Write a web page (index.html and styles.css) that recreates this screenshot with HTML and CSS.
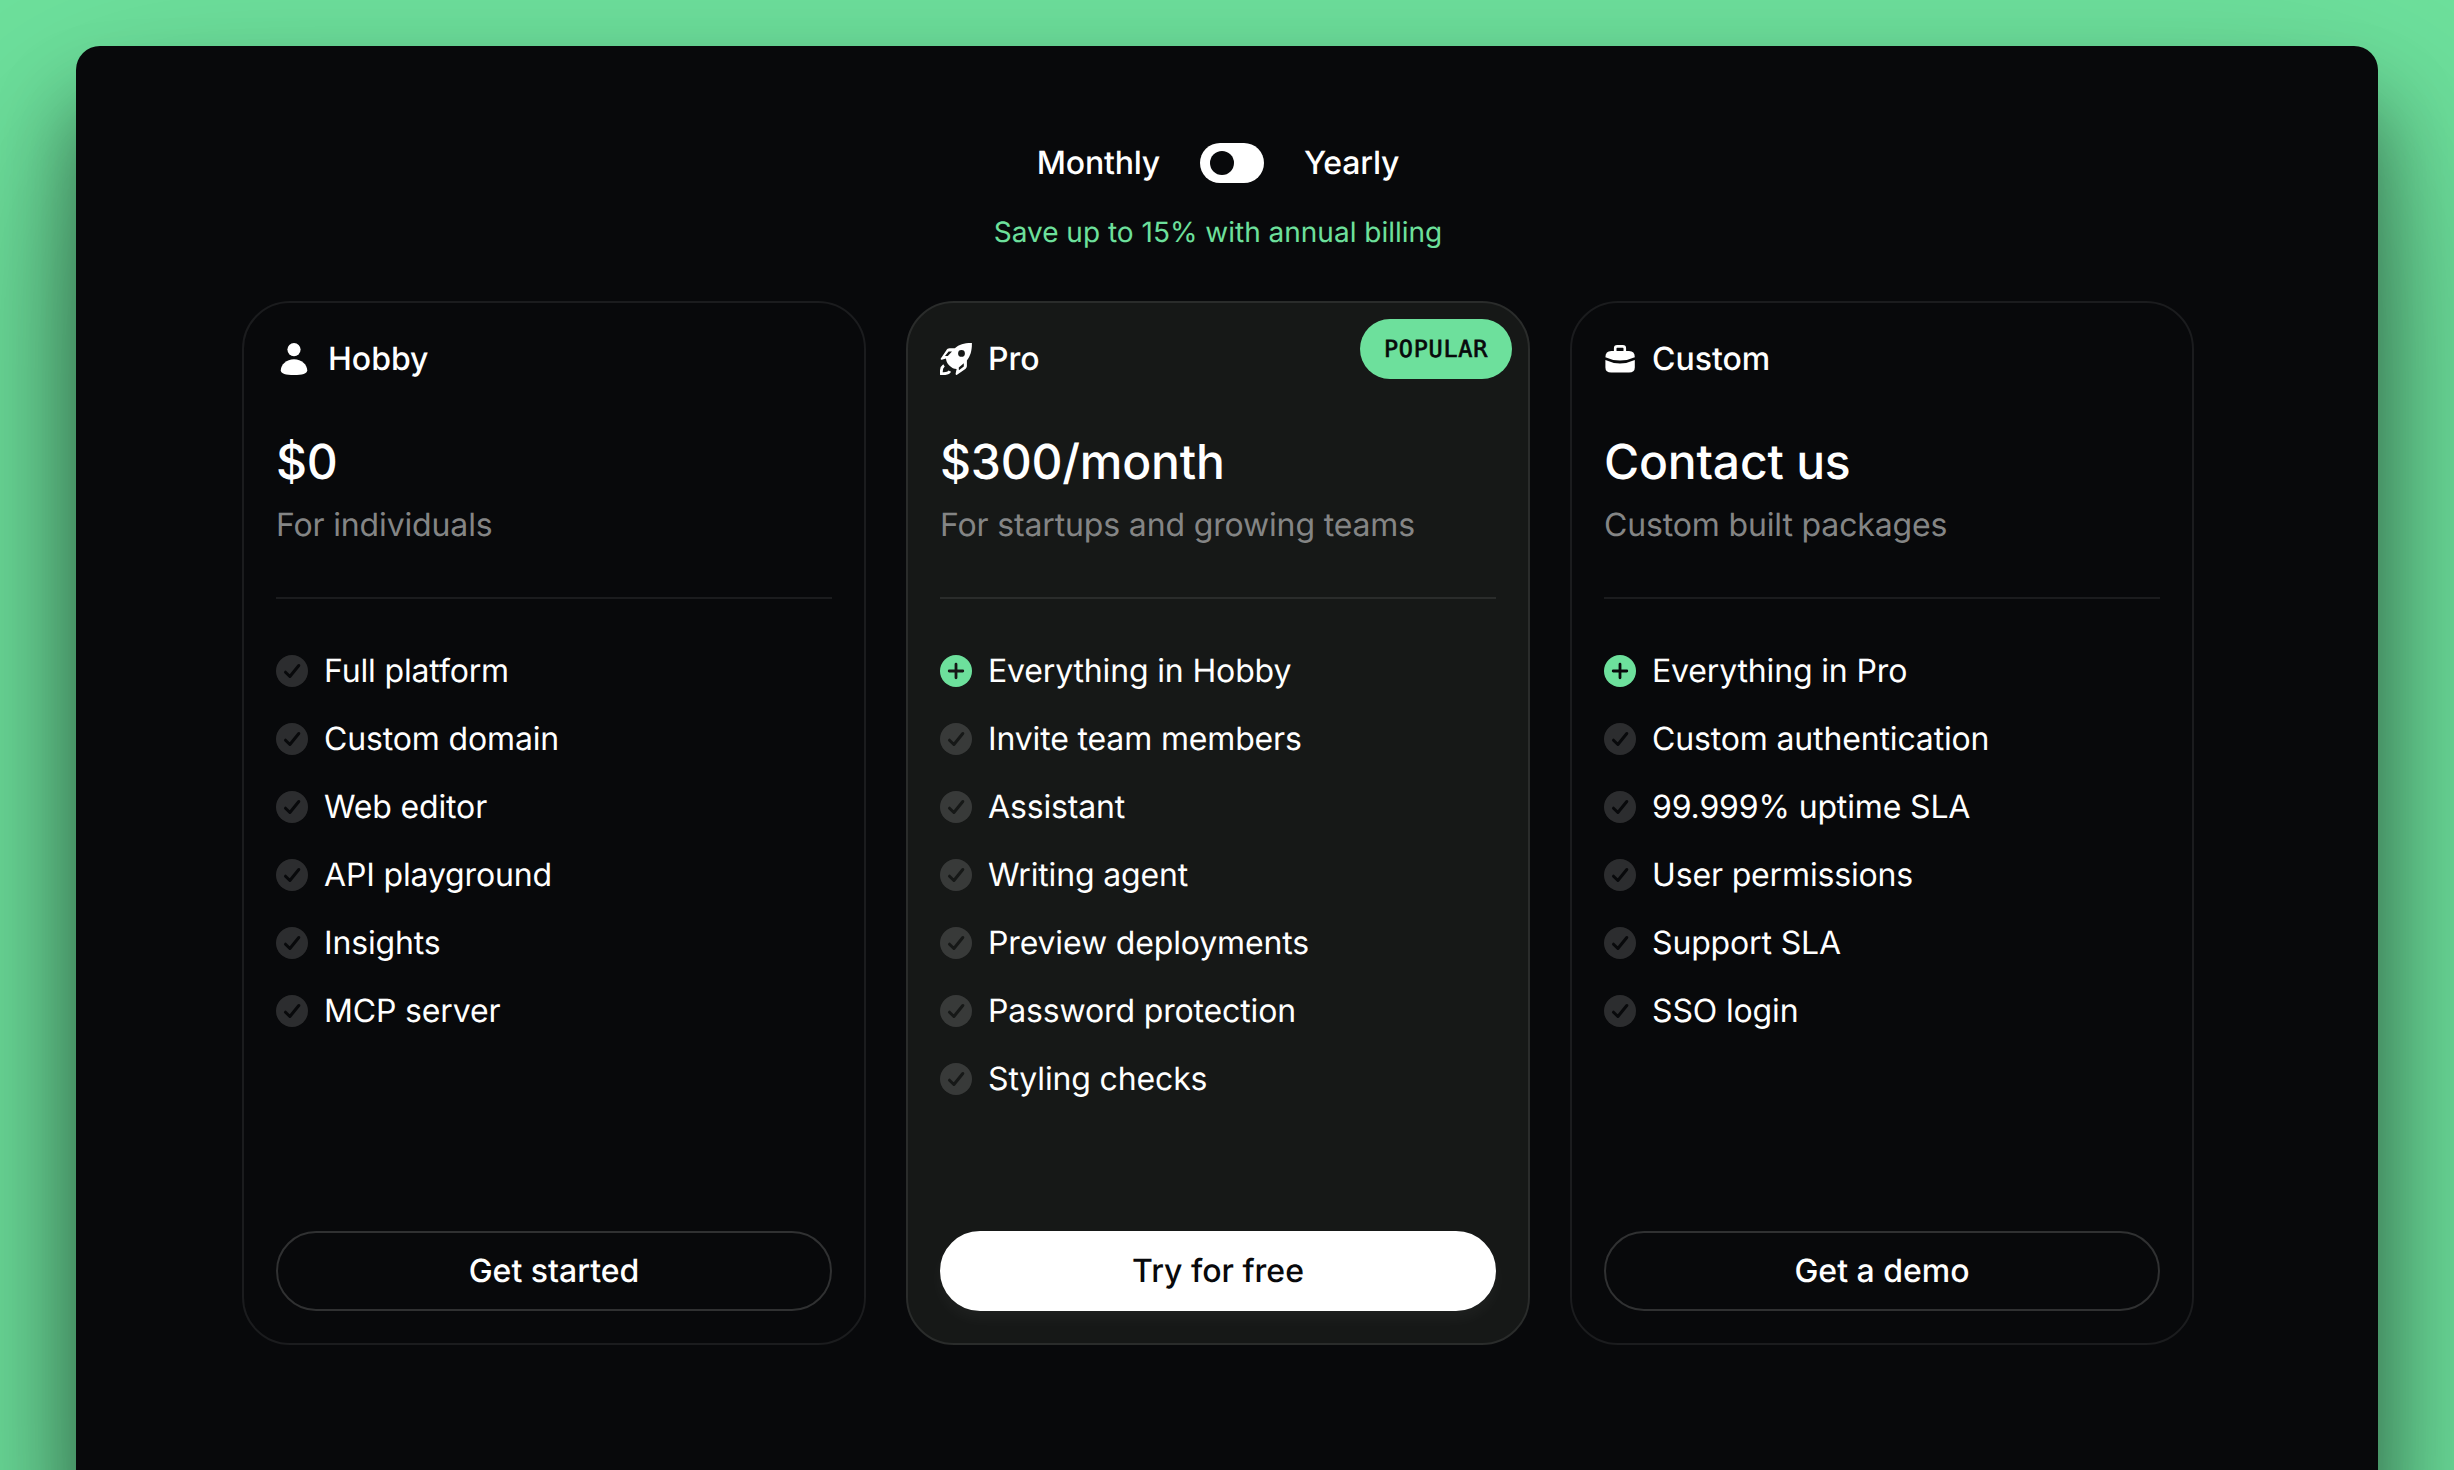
FILE: index.html
```html
<!DOCTYPE html>
<html lang="en">
<head>
  <meta charset="UTF-8" />
  <meta name="viewport" content="width=device-width, initial-scale=1.0"/>
  <title>Pricing</title>
  <link rel="stylesheet" href="styles.css">
</head>
<body>
  <!-- shared list icons -->
  <svg class="sprite" width="0" height="0">
    <symbol id="check" viewBox="0 0 32 32">
      <circle cx="16" cy="16" r="16" fill="#fff" fill-opacity=".15"/>
      <path d="M9.5 17.2L13.9 21.5L22.8 10.5" fill="none" stroke="var(--card-bg)" stroke-width="3" stroke-linecap="round" stroke-linejoin="round"/>
    </symbol>
    <symbol id="plus" viewBox="0 0 32 32">
      <circle cx="16" cy="16" r="16" fill="#6de09c"/>
      <path d="M16 9.2V22.8M9.2 16H22.8" fill="none" stroke="var(--card-bg)" stroke-width="2.8" stroke-linecap="round"/>
    </symbol>
  </svg>

  <main class="panel">
    <div class="billing">
      <div class="billing-row">
        <span>Monthly</span>
        <button class="toggle" type="button" role="switch" aria-checked="false" aria-label="Yearly billing"></button>
        <span>Yearly</span>
      </div>
      <p class="save">Save up to 15% with annual billing</p>
    </div>

    <div class="plans">
      <section class="card">
        <h2>
          <svg class="icon person" viewBox="0 0 36 36">
            <circle cx="18" cy="8.6" r="6.6"/>
            <path d="M18 18.2C25.5 18.2 31.2 23.6 31.2 29.2C31.2 32.6 26.2 34 18 34S4.8 32.6 4.8 29.2C4.8 23.6 10.5 18.2 18 18.2Z"/>
          </svg>
          <span>Hobby</span>
        </h2>
        <p class="price">$0</p>
        <p class="desc">For individuals</p>
        <hr>
        <ul>
          <li><svg><use href="#check"/></svg>Full platform</li>
          <li><svg><use href="#check"/></svg>Custom domain</li>
          <li><svg><use href="#check"/></svg>Web editor</li>
          <li><svg><use href="#check"/></svg>API playground</li>
          <li><svg><use href="#check"/></svg>Insights</li>
          <li><svg><use href="#check"/></svg>MCP server</li>
        </ul>
        <a class="btn" href="#">Get started</a>
      </section>

      <section class="card featured">
        <span class="badge">POPULAR</span>
        <h2>
          <svg class="icon" viewBox="0 0 32 32">
            <path fill-rule="evenodd" d="M31.9 .1C24 0 19.4 1.6 14.8 5.2H9.6C8 5.2 7 6 6.2 7.4L.8 15.4C.4 16.2 .9 16.9 1.8 16.7L6 15.4C6.2 18 6.9 20 9.3 22.6C11.8 25.2 14 25.9 16.6 26L15.6 30.8C15.4 31.8 16.2 32.2 17 31.7L25 26.2C26.4 25.2 26.9 24.2 26.9 22.8V17.4C30.5 12.8 32 8 31.9 .1ZM21.5 7A3.4 3.4 0 1 1 21.5 13.8A3.4 3.4 0 1 1 21.5 7ZM5 13L8.6 8.4H12L7.8 13.1ZM18.9 27.2L18.8 24.4L23.8 20.2V23.4Z"/>
            <path d="M4 22.4C.8 24.4 1.2 27.4 1.4 30.6C5 30.9 8.4 31 9.8 28.2" fill="none" stroke="#fff" stroke-width="2.8"/>
          </svg>
          <span>Pro</span>
        </h2>
        <p class="price">$300/month</p>
        <p class="desc">For startups and growing teams</p>
        <hr>
        <ul>
          <li><svg><use href="#plus"/></svg>Everything in Hobby</li>
          <li><svg><use href="#check"/></svg>Invite team members</li>
          <li><svg><use href="#check"/></svg>Assistant</li>
          <li><svg><use href="#check"/></svg>Writing agent</li>
          <li><svg><use href="#check"/></svg>Preview deployments</li>
          <li><svg><use href="#check"/></svg>Password protection</li>
          <li><svg><use href="#check"/></svg>Styling checks</li>
        </ul>
        <a class="btn btn-primary" href="#">Try for free</a>
      </section>

      <section class="card">
        <h2>
          <svg class="icon" viewBox="0 0 32 32">
            <path d="M11.2 8.5V5.4Q11.2 3.4 13.2 3.4H18.8Q20.8 3.4 20.8 5.4V8.5" fill="none" stroke="#fff" stroke-width="2.6"/>
            <path d="M7.3 8H25Q30.8 8 30.8 14.2Q23.5 17.6 16 17.6T1.4 14.2Q1.4 8 7.3 8Z"/>
            <path d="M1.4 17Q8.5 20.4 16 20.4T30.8 17V24.5Q30.8 29.6 25 29.6H7.3Q1.4 29.6 1.4 24.5Z"/>
          </svg>
          <span>Custom</span>
        </h2>
        <p class="price">Contact us</p>
        <p class="desc">Custom built packages</p>
        <hr>
        <ul>
          <li><svg><use href="#plus"/></svg>Everything in Pro</li>
          <li><svg><use href="#check"/></svg>Custom authentication</li>
          <li><svg><use href="#check"/></svg>99.999% uptime SLA</li>
          <li><svg><use href="#check"/></svg>User permissions</li>
          <li><svg><use href="#check"/></svg>Support SLA</li>
          <li><svg><use href="#check"/></svg>SSO login</li>
        </ul>
        <a class="btn" href="#">Get a demo</a>
      </section>
    </div>
  </main>
</body>
</html>
```

FILE: styles.css
```css
* {
  box-sizing: border-box;
}

body {
  font-family: Inter, sans-serif;
  font-size: 32px;
  text-rendering: geometricPrecision;
  background: #6de09c;
  color: #fff;
  margin: 0;
  padding: 46px 76px 0;
  height: 1470px;
  overflow: hidden;
}

.sprite {
  position: absolute;
}

.panel {
  height: 1500px;
  padding: 93px 184px 0 166px;
  background: #08090b;
  border-radius: 24px;
  box-shadow: 0 100px 200px rgba(0, 0, 0, 0.35), 0 60px 80px rgba(0, 0, 0, 0.4);
}

.billing {
  display: flex;
  flex-direction: column;
  align-items: center;
}

.billing-row {
  display: flex;
  align-items: center;
  gap: 40px;
  height: 48px;
  font-weight: 500;
  letter-spacing: -0.2px;
}

.billing-row span {
  padding-bottom: 2px;
}

.toggle {
  width: 64px;
  height: 40px;
  padding: 0 10px;
  border: none;
  border-radius: 20px;
  background: #fff;
}

.toggle::before {
  content: "";
  display: block;
  width: 24px;
  height: 24px;
  border-radius: 50%;
  background: #08090b;
}

.save {
  margin: 25px 0 0;
  font-size: 28px;
  line-height: 40px;
  color: #6de09c;
}

.plans {
  display: grid;
  grid-template-columns: repeat(3, 1fr);
  gap: 40px;
  margin-top: 49px;
}

.card {
  --card-bg: #08090b;
  position: relative;
  display: flex;
  flex-direction: column;
  height: 1044px;
  padding: 32px;
  border: 2px solid #1b1c1e;
  border-radius: 48px;
  background: var(--card-bg);
}

.card.featured {
  --card-bg: #161817;
  border-color: #2a2c2b;
}

h2 {
  display: flex;
  align-items: center;
  gap: 16px;
  height: 48px;
  margin: 0;
  font-size: 32px;
  font-weight: 500;
}

h2 span {
  padding-bottom: 2px;
}

.icon {
  width: 32px;
  height: 32px;
  fill: #fff;
}

.icon.person {
  width: 36px;
  height: 36px;
}

.badge {
  position: absolute;
  top: 16px;
  right: 16px;
  height: 60px;
  padding: 0 24px;
  border-radius: 30px;
  background: #6de09c;
  color: #08090b;
  font-family: "DejaVu Sans Mono", monospace;
  font-size: 23.5px;
  letter-spacing: 0.71px;
  line-height: 60px;
  -webkit-text-stroke: 0.7px #08090b;
}

.price {
  margin: 47px 0 0;
  font-size: 48px;
  font-weight: 500;
  line-height: 64px;
  letter-spacing: -0.2px;
}

.desc {
  margin: 7px 0 0;
  line-height: 48px;
  letter-spacing: -0.15px;
  color: #848585;
}

hr {
  width: 100%;
  margin: 48px 0;
  border: none;
  border-top: 2px solid #1b1c1e;
}

.featured hr {
  border-color: #2a2c2b;
}

ul {
  display: flex;
  flex-direction: column;
  gap: 20px;
  margin: 0;
  padding: 0;
  list-style: none;
}

li {
  display: flex;
  align-items: center;
  gap: 16px;
  line-height: 48px;
  letter-spacing: -0.15px;
}

li svg {
  width: 32px;
  height: 32px;
}

.btn {
  display: flex;
  align-items: center;
  justify-content: center;
  height: 80px;
  margin-top: auto;
  padding-bottom: 2px;
  border: 2px solid #303132;
  border-radius: 40px;
  color: #fff;
  font-weight: 500;
  text-decoration: none;
}

.btn-primary {
  border-color: #fff;
  background: #fff;
  color: #08090b;
  box-shadow: 0 8px 16px rgba(255, 255, 255, 0.04);
}
```
